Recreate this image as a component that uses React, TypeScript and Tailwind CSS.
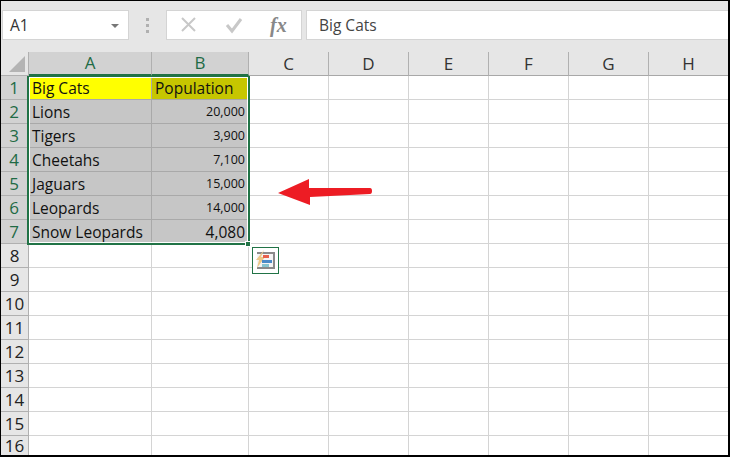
const columns = [
  { name: "A", width: "w-[123px]", active: true },
  { name: "B", width: "w-[97px]", active: true },
  { name: "C", width: "w-[80px]" },
  { name: "D", width: "w-[80px]" },
  { name: "E", width: "w-[80px]" },
  { name: "F", width: "w-[80px]" },
  { name: "G", width: "w-[80px]" },
  { name: "H", width: "w-[80px]" },
];

const data = [
  ["Big Cats", "Population"],
  ["Lions", "20,000"],
  ["Tigers", "3,900"],
  ["Cheetahs", "7,100"],
  ["Jaguars", "15,000"],
  ["Leopards", "14,000"],
  ["Snow Leopards", "4,080"],
];

const rows = Array.from({ length: 16 }, (_, i) => i + 1);

function FormulaBar() {
  return (
    <div className="flex h-[39px] shrink-0 gap-[4px] pl-[1px] pt-[9px] bg-[#e6e6e6]">
      <div className="flex h-[30px] w-[127px] items-center justify-between border border-[#d4d4d4] bg-white pl-[7px] pr-[9px] pt-[2px] text-[15.5px] text-[#333]">
        A1
        <span className="h-0 w-0 border-x-[4px] border-t-[4px] border-x-transparent border-t-[#777]" />
      </div>
      <div className="flex w-[29px] flex-col items-center justify-center gap-[3px]">
        <span className="h-[3px] w-[3px] bg-[#b0b0b0]" />
        <span className="h-[3px] w-[3px] bg-[#b0b0b0]" />
        <span className="h-[3px] w-[3px] bg-[#b0b0b0]" />
      </div>
      <div className="flex h-[30px] w-[136px] items-center border border-[#d4d4d4] bg-white">
        <svg width="134" height="28" viewBox="0 0 134 28" fill="none" className="shrink-0">
          <path d="M15 7l13 13M28 7L15 20" stroke="#c8c8c8" strokeWidth="2" />
          <path d="M60 14l5 6 9-12" stroke="#c8c8c8" strokeWidth="3" />
        </svg>
        <span className="-ml-[31px] font-['Liberation_Serif',serif] text-[20px] italic font-bold text-[#888]">fx</span>
      </div>
      <div className="flex h-[30px] flex-1 items-center border border-r-0 border-[#d4d4d4] bg-white pl-[12px] pt-[2px] text-[15.5px] text-[#444]">
        Big Cats
      </div>
    </div>
  );
}

function ColumnHeaders() {
  return (
    <div className="flex h-[36px] shrink-0 items-end bg-[#e6e6e6]">
      <div className="relative h-[24px] w-[28px] shrink-0 border-b border-r border-[#b0b0b0]">
        <svg width="17" height="17" viewBox="0 0 17 17" className="absolute right-[2px] bottom-[2px]">
          <path d="M16 0v16H0z" fill="#b4b4b4" />
        </svg>
      </div>
      {columns.map((c) => (
        <div
          key={c.name}
          className={`${c.width} flex h-[24px] shrink-0 items-center justify-center border-r text-[17px] ${
            c.active
              ? "border-[#b0b0b0] border-b-2 border-b-[#217346] bg-[#d2d2d2] text-[#1f6b45]"
              : "border-[#b0b0b0] border-b border-b-[#a8a8a8] text-[#333]"
          }`}
        >
          {c.name}
        </div>
      ))}
    </div>
  );
}

function Sheet() {
  return (
    <div className="relative flex-1 overflow-hidden">
      {rows.map((r) => {
        const row = data[r - 1];
        const active = r <= 7;
        return (
          <div key={r} className="flex h-[24px]">
            <div
              className={`flex w-[28px] shrink-0 items-center justify-center border-b border-r border-[#b0b0b0] text-[17px] leading-[15px] ${
                active ? "bg-[#d2d2d2] text-[#1f6b45] border-r-2 border-r-[#217346]" : "bg-[#e6e6e6] text-[#222]"
              } ${r === 16 ? "pb-[4px]" : ""}`}
            >
              {r}
            </div>
            {columns.map((c, i) => {
              const value = row?.[i];
              const isHead = r === 1;
              let bg = "";
              if (row && i < 2) bg = "bg-[#c6c6c6]";
              if (isHead && i === 0) bg = "bg-[#ffff00]";
              if (isHead && i === 1) bg = "bg-[#c6c600]";
              const isNum = !isHead && i === 1;
              const size = isNum && r !== 7 ? "text-[12.5px]" : "text-[15.5px]";
              return (
                <div
                  key={c.name}
                  className={`${c.width} ${bg} ${size} flex shrink-0 items-center overflow-hidden whitespace-nowrap border-b border-r pl-[3px] pr-[3px] pt-[2px] text-[#111] ${
                    row && i < 2 ? "border-[#a9a9a9]" : "border-[#d4d4d4]"
                  } ${isNum ? "justify-end" : ""}`}
                >
                  {value}
                </div>
              );
            })}
          </div>
        );
      })}

      {/* Selection outline */}
      <div className="pointer-events-none absolute left-[26px] top-[-1px] h-[170px] w-[223px] border-2 border-[#217346]">
        <div className="h-full w-full border border-white" />
      </div>
      <div className="absolute left-[244px] top-[165px] h-[6px] w-[6px] border border-white bg-[#217346]" />

      {/* Quick analysis button */}
      <div className="absolute left-[251px] top-[171px] flex h-[27px] w-[27px] items-center justify-center border border-[#217346] bg-white">
        <svg width="25" height="25" viewBox="0 0 25 25" className="shrink-0">
          <path d="M4 4h18v17H4z" fill="#f4f4f4" />
          <path d="M4 4h18v2H4zM20 4h2v17h-2zM4 19h18v2H4z" fill="#8a8a8a" />
          <path d="M11 2L3 12h3l-2 8 8-11H8l3-7z" fill="#ecc888" />
          <path d="M10 7h6v3h-6z" fill="#e8604c" />
          <path d="M9 12h10v3H9z" fill="#4a8ac8" />
          <path d="M9 16h7v3H9z" fill="#86c4d0" />
        </svg>
      </div>

      {/* Annotation arrow */}
      <svg width="100" height="30" viewBox="0 0 100 30" className="absolute left-[276px] top-[103px]">
        <path d="M1 14L32 0v9h61q2 0 2 3t-2 3l-60 3v8z" fill="#ed1c24" />
      </svg>
    </div>
  );
}

export default function App() {
  return (
    <div className="flex h-[457px] w-[730px] flex-col overflow-hidden border border-r-2 border-b-2 border-black bg-white font-['Open_Sans','Noto_Sans',sans-serif]">
      <FormulaBar />
      <ColumnHeaders />
      <Sheet />
    </div>
  );
}
